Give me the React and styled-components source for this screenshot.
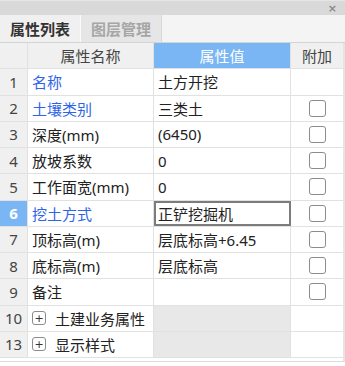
import React from 'react';
import styled, { createGlobalStyle } from 'styled-components';

const GlobalStyle = createGlobalStyle`
  html, body {
    margin: 0;
    padding: 0;
    background: #ffffff;
  }
  body {
    font-family: "Segoe UI", "Noto Sans", "Noto Sans CJK SC", sans-serif;
  }
`;

const COLS = '28px 126px 137px 52px';

const Panel = styled.div`
  width: 345px;
  height: 366px;
  display: flex;
  flex-direction: column;
  background: #ffffff;
  overflow: hidden;
`;

const TitleBar = styled.div`
  height: 15px;
  flex: none;
  background: #d9d9d9;
  border-top: 1px solid #e6e6e6;
  box-sizing: border-box;
  display: flex;
  justify-content: flex-end;
  align-items: center;
  padding-right: 8px;
`;

const Close = styled.span`
  font-family: "DejaVu Sans", sans-serif;
  font-size: 11px;
  line-height: 1;
  color: #8a8a8a;
  font-weight: bold;
`;

const TabStrip = styled.div`
  height: 28px;
  flex: none;
  display: flex;
  background: #f4f4f4;
  border-bottom: 1px solid #d4d4d4;
  box-sizing: border-box;
`;

const Tab = styled.div`
  width: 81px;
  display: flex;
  align-items: center;
  justify-content: center;
  font-family: "Noto Sans CJK SC", sans-serif;
  font-size: 15px;
  font-weight: bold;
  color: ${p => (p.$active ? '#333333' : '#a6a6a6')};
  background: ${p => (p.$active ? '#f0f0f0' : '#e6e6e6')};
  border-right: 1px solid ${p => (p.$active ? '#fafafa' : '#d8d8d8')};
  box-sizing: border-box;
`;

const Table = styled.div`
  display: flex;
  flex-direction: column;
  border-right: 2px solid #e4e4e4;
  width: 345px;
  box-sizing: border-box;
`;

const Row = styled.div`
  display: grid;
  grid-template-columns: ${COLS};
  height: 26.25px;
  box-sizing: border-box;
  border-bottom: 1px solid #e1e1e1;
`;

const Cell = styled.div`
  display: flex;
  align-items: center;
  box-sizing: border-box;
  border-right: 1px solid #e1e1e1;
  font-size: 15px;
  color: #222222;
  white-space: nowrap;
  overflow: hidden;
  font-family: "Segoe UI", "Noto Sans", "Noto Sans CJK SC", sans-serif;
`;

const HeadCell = styled(Cell)`
  justify-content: center;
  background: ${p => (p.$hl ? '#7ab6f4' : '#f0f0f0')};
  color: ${p => (p.$hl ? '#ffffff' : '#444444')};
  border-right: ${p => (p.$last ? 'none' : '1px solid #e1e1e1')};
  font-family: "Noto Sans CJK SC", sans-serif;
`;

const NumCell = styled(Cell)`
  justify-content: center;
  background: ${p => (p.$hl ? '#7ab6f4' : '#f0f0f0')};
  color: ${p => (p.$hl ? '#ffffff' : '#444444')};
  font-weight: ${p => (p.$hl ? 'bold' : 'normal')};
`;

const NameCell = styled(Cell)`
  padding-left: 4px;
  color: ${p => (p.$link ? '#2e64e8' : '#222222')};
`;

const ValueCell = styled(Cell)`
  padding-left: ${p => (p.$edit ? '2px' : '4px')};
  background: ${p => (p.$gray ? '#e8e8e8' : '#ffffff')};
  border: ${p => (p.$edit ? '2px solid #7c7c7c' : 'none')};
  border-right: ${p => (p.$edit ? '2px solid #7c7c7c' : '1px solid #e1e1e1')};
`;

const ExtraCell = styled(Cell)`
  justify-content: center;
  border-right: none;
`;

const Check = styled.span`
  width: 17px;
  height: 17px;
  box-sizing: border-box;
  border: 1px solid #8c8c8c;
  border-radius: 3px;
  background: #ffffff;
`;

const Expand = styled.span`
  width: 14px;
  height: 14px;
  box-sizing: border-box;
  border: 1px solid #8c8c8c;
  border-radius: 3px;
  display: inline-flex;
  align-items: center;
  justify-content: center;
  font-family: "DejaVu Sans", sans-serif;
  font-size: 11px;
  line-height: 1;
  color: #333333;
  margin-right: 9px;
  flex: none;
`;

const Footer = styled.div`
  height: 4px;
  border-bottom: 1px solid #dcdcdc;
  border-right: 2px solid #e4e4e4;
  width: 345px;
  box-sizing: border-box;
`;

const rows = [
  { n: '1', name: '名称', value: '土方开挖', link: true, check: false },
  { n: '2', name: '土壤类别', value: '三类土', link: true, check: true },
  { n: '3', name: '深度(mm)', value: '(6450)', check: true },
  { n: '4', name: '放坡系数', value: '0', check: true },
  { n: '5', name: '工作面宽(mm)', value: '0', check: true },
  { n: '6', name: '挖土方式', value: '正铲挖掘机', link: true, check: true, edit: true },
  { n: '7', name: '顶标高(m)', value: '层底标高+6.45', check: true },
  { n: '8', name: '底标高(m)', value: '层底标高', check: true },
  { n: '9', name: '备注', value: '', check: true },
  { n: '10', name: '土建业务属性', group: true },
  { n: '13', name: '显示样式', group: true },
];

export default function App() {
  return (
    <>
      <GlobalStyle />
      <Panel>
        <TitleBar>
          <Close>×</Close>
        </TitleBar>
        <TabStrip>
          <Tab $active>属性列表</Tab>
          <Tab>图层管理</Tab>
        </TabStrip>
        <Table>
          <Row>
            <HeadCell />
            <HeadCell>属性名称</HeadCell>
            <HeadCell $hl>属性值</HeadCell>
            <HeadCell $last>附加</HeadCell>
          </Row>
          {rows.map(r => (
            <Row key={r.n}>
              <NumCell $hl={r.edit}>{r.n}</NumCell>
              <NameCell $link={r.link}>
                {r.group && <Expand>+</Expand>}
                {r.name}
              </NameCell>
              <ValueCell $edit={r.edit} $gray={r.group}>{r.value}</ValueCell>
              <ExtraCell>{r.check && <Check />}</ExtraCell>
            </Row>
          ))}
        </Table>
        <Footer />
      </Panel>
    </>
  );
}
